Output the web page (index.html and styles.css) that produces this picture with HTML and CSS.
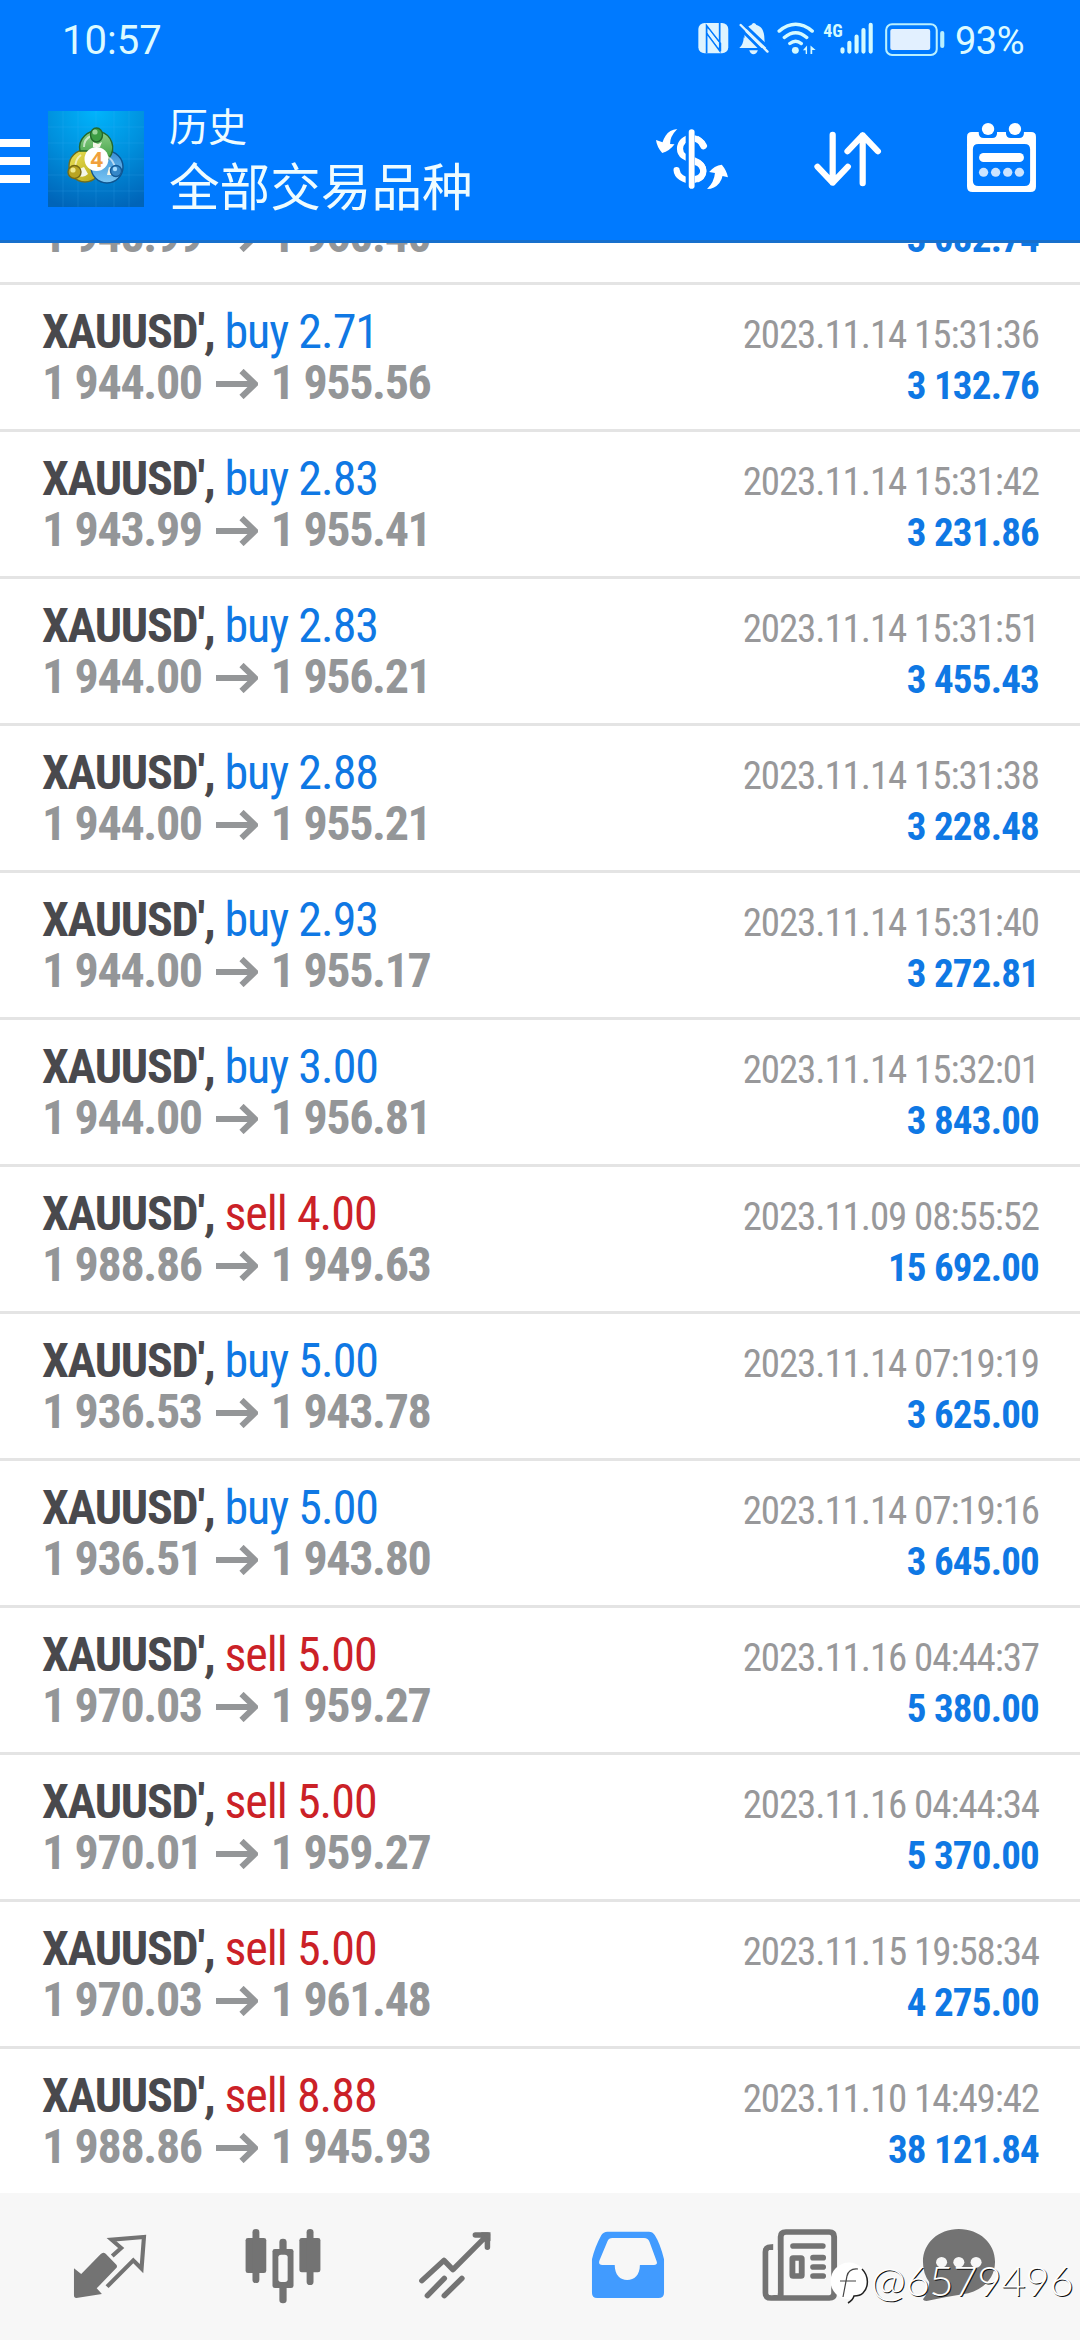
FILE: index.html
```
<!DOCTYPE html>
<html lang="zh-CN">
<head>
<meta charset="utf-8">
<title>历史</title>
<link rel="stylesheet" href="styles.css">
</head>
<body>
<div class="screen">
  <header class="header">
    <div class="status">
      <span class="clock">10:57</span>
      <svg class="status-icons" viewBox="457 60 718 110" preserveAspectRatio="none">
        <rect x="458" y="66" width="87" height="90" rx="18" fill="#def4ff"/>
        <path d="M482 156V74L522 126V150M520 66V148L482 96V156" fill="none" stroke="#007aff" stroke-width="5"/>
        <path d="M487 84L517 124V140L487 99Z" fill="#def4ff"/>
        <path d="M586 140Q592 130 592 112C592 86 602 74 612 72Q619 60 627 72C642 76 650 90 650 112Q650 130 658 140Z" fill="#def4ff"/>
        <path d="M606 147H631Q627 159 618 159Q610 159 606 147Z" fill="#def4ff"/>
        <path d="M577 80L655 160" stroke="#007aff" stroke-width="8"/>
        <path d="M586 66L668 146" stroke="#007aff" stroke-width="9"/>
        <path d="M581 72L659 151" stroke="#def4ff" stroke-width="7" stroke-linecap="round"/>
        <path d="M577 140Q589 130 590 108L622 140Z" fill="#def4ff"/>
        <g fill="none" stroke="#d4faff" stroke-width="10" stroke-linecap="round">
          <path d="M693 90Q741 50 789 90M708 109Q741 81 773 109M724 127Q741 113 757 127"/>
        </g>
        <circle cx="740" cy="147" r="10" fill="#d4faff"/>
        <path d="M762 147L774 133V158H770V147ZM784 133L799 146H789V158H784Z" fill="#d4faff"/>
        <text x="821" y="107" class="net">4G</text>
        <g stroke="#d4faff" stroke-width="12" stroke-linecap="round">
          <path d="M877 144V151M897 125V151M918 106V151M938 87V151M959 71V151"/>
        </g>
        <rect x="1004" y="70" width="147" height="91" rx="17" fill="none" stroke="#b9f0ff" stroke-width="6"/>
        <rect x="1016" y="84" width="116" height="62" rx="6" fill="#e2f0ff"/>
        <rect x="1161" y="90" width="12" height="50" rx="6" fill="#b9f0ff"/>
      </svg>
      <span class="battery">93%</span>
    </div>
    <div class="toolbar">
      <svg class="menu" viewBox="0 0 30 44"><path d="M0 4H30M0 22H30M0 40H30" stroke="#fff" stroke-width="8"/></svg>
      <svg class="logo" viewBox="0 0 96 96">
        <defs>
          <radialGradient id="bg" cx=".5" cy="0" r="1.05"><stop offset="0" stop-color="#00b4fc"/><stop offset=".5" stop-color="#0090dd"/><stop offset="1" stop-color="#0064b8"/></radialGradient>
          <linearGradient id="gr" x2="0" y2="1"><stop offset="0" stop-color="#8fd08a"/><stop offset="1" stop-color="#2c9433"/></linearGradient>
          <linearGradient id="ye" x2="1" y2="1"><stop offset="0" stop-color="#ece35a"/><stop offset="1" stop-color="#b3a412"/></linearGradient>
          <linearGradient id="bl" x2="0" y2="1"><stop offset="0" stop-color="#3a8ed4"/><stop offset="1" stop-color="#79c6f4"/></linearGradient>
        </defs>
        <rect width="96" height="96" fill="url(#bg)"/>
        <path d="M15 0V96M30 0V96M48 0V96M66 0V96M81 0V96M0 16H96M0 32H96M0 48H96M0 64H96M0 80H96" stroke="#4fc3ff" stroke-opacity=".15" fill="none"/>
        <g stroke-width="1.4">
          <circle cx="37" cy="55" r="16" fill="url(#ye)" stroke="#6d6d22"/>
          <circle cx="59" cy="56" r="16" fill="url(#bl)" stroke="#0e548f"/>
          <path d="M32 40A16.500 16.500 0 1 1 61 47L55 55L40 40Z" fill="url(#gr)" stroke="#24682b"/>
          <path d="M36 36Q36 28 43 25M60 46Q66 50 67 57M27 58Q27 48 33 44" fill="none" stroke="#fff" stroke-opacity=".6" stroke-width="2"/>
          <path d="M31 58L36 56L40 63Q36 67 31 65ZM61 56L66 58L65 64L59 64ZM45 31L50 33L54 31L52 36H45Z" fill="#f4f6e8"/>
          <ellipse cx="48.500" cy="24" rx="6" ry="7" fill="#3d9d44" stroke="#24682b"/>
          <circle cx="26.500" cy="61" r="6.500" fill="#b9a423" stroke="#776b14"/>
          <circle cx="68" cy="60" r="5.500" fill="#3587c8" stroke="#145a98"/>
          <circle cx="47" cy="21" r="2.600" fill="#9bd59b"/>
          <circle cx="25" cy="59" r="2.600" fill="#f0e88c"/>
          <circle cx="67" cy="58" r="2.200" fill="#a4dbff"/>
        </g>
        <circle cx="48.500" cy="48" r="12" fill="#fff"/>
        <text x="42.500" y="56" class="four">4</text>
      </svg>
      <div class="titles"><div class="section">历史</div><div class="title">全部交易品种</div></div>
      <svg class="ic-dollar" viewBox="328 384 216 186" preserveAspectRatio="none">
        <path d="M469 439Q460 413 436 413C414 413 401 430 401 446C401 467 419 474 436 480C455 486 469 497 469 513C469 532 452 542 436 542C412 542 392 528 391 510" fill="none" stroke="#fff" stroke-width="18" stroke-linecap="round"/>
        <path d="M435 384V570" stroke="#007aff" stroke-width="35"/>
        <path d="M444 406Q468 412 478 432A8 8 0 0 1 463 443Q457 430 444 425ZM444 472Q479 486 478 514Q477 541 444 549V528Q461 524 460 512Q460 501 444 495Z" fill="#fff"/>
        <path d="M435 396V558" stroke="#fff" stroke-width="17" stroke-linecap="round"/>
        <path d="M393 387Q370 389 359 407Q352 418 350 427L331 420Q333 440 349 459Q370 454 385 433L372 432Q371 410 393 387Z" fill="#fff"/>
        <path d="M480 567Q502 567 516 549Q524 537 525 528L541 532Q537 511 523 494Q501 497 486 516L503 519Q501 546 480 567Z" fill="#fff"/>
      </svg>
      <svg class="ic-sort" viewBox="788 390 200 174" preserveAspectRatio="none">
        <path d="M845 404V548M801 500L845 548L889 500M932 550V406M888 454L932 406L976 454" fill="none" stroke="#fff" stroke-width="18" stroke-linecap="round" stroke-linejoin="round"/>
      </svg>
      <svg class="ic-cal" viewBox="1234 366 206 213" preserveAspectRatio="none">
        <path fill-rule="evenodd" d="M1251 396H1423Q1437 396 1437 410V560Q1437 576 1421 576H1253Q1237 576 1237 560V410Q1237 396 1251 396ZM1270 432Q1254 432 1254 448V542Q1254 558 1270 558H1404Q1420 558 1420 542V448Q1420 432 1404 432Z" fill="#fff"/>
        <path d="M1271 390V400Q1271 414 1286 414H1310Q1324 414 1324 400V390ZM1350 390V400Q1350 414 1364 414H1388Q1402 414 1402 400V390Z" fill="#007aff"/>
        <circle cx="1298" cy="387" r="18" fill="#fff"/><circle cx="1376" cy="387" r="18" fill="#fff"/>
        <rect x="1272" y="459" width="130" height="27" rx="13" fill="#fff"/>
        <g fill="#cce4ff"><circle cx="1285" cy="517" r="13.500"/><circle cx="1320" cy="517" r="13.500"/><circle cx="1355" cy="517" r="13.500"/><circle cx="1389" cy="517" r="13.500"/></g>
      </svg>
    </div>
  </header>

  <main class="list" id="list"></main>

  <nav class="nav">
    <svg viewBox="203.500 120 232 270" preserveAspectRatio="none">
      <path d="M215 265L236 282L292 223Q299 215 307 221L338 254Q342 260 337 265L281 325L296 342L222 354Q215 354 215 346Z" fill="#737373"/>
      <path d="M326 228L352 204L324 179L418 171L411 266L387 241L311 320" fill="none" stroke="#737373" stroke-width="12"/>
    </svg>
    <svg viewBox="701.500 120 232 270" preserveAspectRatio="none">
      <g fill="#737373"><rect x="709" y="174" width="60" height="105" rx="7"/><rect x="865" y="174" width="61" height="103" rx="7"/><rect x="729" y="147" width="20" height="162" rx="10"/><rect x="886" y="147" width="20" height="168" rx="10"/><rect x="807" y="176" width="21" height="194" rx="10"/><rect x="787" y="207" width="61" height="117" rx="7"/></g>
      <rect x="804" y="224" width="27" height="82" rx="8" fill="#f7f7f7"/>
    </svg>
    <svg viewBox="1201 120 232 270" preserveAspectRatio="none">
      <path d="M1221 302L1285 241L1311 269L1411 165M1376 165H1411V202M1237 347L1286 295M1286 347L1337 295" fill="none" stroke="#737373" stroke-width="16" stroke-linecap="round" stroke-linejoin="round"/>
      <path d="M1392 157H1420V184Z" fill="#737373"/>
    </svg>
    <svg viewBox="135.500 120 232 270" preserveAspectRatio="none">
      <path fill-rule="evenodd" d="M192 155H312Q323 155 329 165Q345 191 356 238V338Q356 354 340 354H162Q147 354 147 338V238Q155 202 174 166Q180 155 192 155ZM206 174Q196 174 192 184L169 241Q164 255 177 255H213C213 285 229 300 249 300C270 300 286 285 286 255H327Q339 255 334 242L314 186Q310 174 298 174Z" fill="#419bff"/>
    </svg>
    <svg viewBox="639 120 232 270" preserveAspectRatio="none">
      <path d="M677 201H671Q655 201 655 216V338Q655 354 671 354H840Q854 354 854 340V170Q854 156 840 156H714Q699 156 699 170V352" fill="none" stroke="#737373" stroke-width="17"/>
      <path d="M677 192V210H668L662 204ZM690 340V354H662Z" fill="#737373"/>
      <path d="M664 214Q664 210 668 210H690V345H668Q664 345 664 341Z" fill="#f7f7f7"/>
      <path d="M735 198H821M793 233H822M793 261H822M793 288H822" stroke="#737373" stroke-width="17" stroke-linecap="round"/>
      <rect x="733" y="234" width="27" height="54" rx="2" fill="none" stroke="#737373" stroke-width="17"/>
    </svg>
    <svg class="chat" viewBox="1097.500 120 232 270" preserveAspectRatio="none">
      <path d="M1213 147C1273 147 1318 190 1318 245C1318 300 1275 336 1224 343Q1180 350 1130 361Q1112 366 1109 358Q1127 335 1127 306Q1109 280 1109 245C1109 190 1153 147 1213 147Z" fill="#737373"/>
      <g fill="#f7f7f7"><circle cx="1163" cy="247" r="16"/><circle cx="1213" cy="247" r="16"/><circle cx="1263" cy="247" r="16"/></g>
    </svg>
  </nav>

  <div class="watermark">
    <svg viewBox="0 0 42 46"><circle cx="20" cy="20" r="18.500" fill="#fff"/><path d="M33 8C40 15 40 26 34 32Q31 35 25 35Q24 39 19 42" fill="none" stroke="#222" stroke-width="1.500"/><path d="M29 8Q20 7 18 15L14 36M11 20H27" fill="none" stroke="#444" stroke-width="1.200"/></svg>
    <span>@6579496</span>
  </div>
</div>
<script src="rows.js"></script>
</body>
</html>
```
FILE: rows.js
```
const deals = [
  ["buy", "2.70", "1 948.99", "1 960.40", "2023.11.14 15:31:35", "3 082.74"],
  ["buy", "2.71", "1 944.00", "1 955.56", "2023.11.14 15:31:36", "3 132.76"],
  ["buy", "2.83", "1 943.99", "1 955.41", "2023.11.14 15:31:42", "3 231.86"],
  ["buy", "2.83", "1 944.00", "1 956.21", "2023.11.14 15:31:51", "3 455.43"],
  ["buy", "2.88", "1 944.00", "1 955.21", "2023.11.14 15:31:38", "3 228.48"],
  ["buy", "2.93", "1 944.00", "1 955.17", "2023.11.14 15:31:40", "3 272.81"],
  ["buy", "3.00", "1 944.00", "1 956.81", "2023.11.14 15:32:01", "3 843.00"],
  ["sell", "4.00", "1 988.86", "1 949.63", "2023.11.09 08:55:52", "15 692.00"],
  ["buy", "5.00", "1 936.53", "1 943.78", "2023.11.14 07:19:19", "3 625.00"],
  ["buy", "5.00", "1 936.51", "1 943.80", "2023.11.14 07:19:16", "3 645.00"],
  ["sell", "5.00", "1 970.03", "1 959.27", "2023.11.16 04:44:37", "5 380.00"],
  ["sell", "5.00", "1 970.01", "1 959.27", "2023.11.16 04:44:34", "5 370.00"],
  ["sell", "5.00", "1 970.03", "1 961.48", "2023.11.15 19:58:34", "4 275.00"],
  ["sell", "8.88", "1 988.86", "1 945.93", "2023.11.10 14:49:42", "38 121.84"]
];
const arrow = '<svg class="arrow" viewBox="0 0 42 30"><path d="M0 15H39M25.500 2L39 15L25.500 28" fill="none" stroke="#949698" stroke-width="6"/></svg>';
document.getElementById("list").innerHTML = deals.map(([side, lots, open, close, time, profit]) => `
  <article class="deal">
    <div class="line"><span><b class="symbol">XAUUSD',</b><span class="order ${side}">${side} ${lots}</span></span><time class="time">${time}</time></div>
    <div class="line"><span class="prices">${open}${arrow}${close}</span><span class="profit">${profit}</span></div>
  </article>`).join("");
```
FILE: styles.css
```
* { box-sizing: border-box; }
body { margin: 0; background: #fff; }
.screen {
  position: relative;
  display: flex;
  flex-direction: column;
  width: 1080px;
  height: 2340px;
  overflow: hidden;
  font-family: "Roboto Condensed", Roboto, sans-serif;
}
svg { display: block; flex: none; }

.header {
  flex: none;
  height: 243px;
  background: #007aff;
  border-bottom: 3px solid #1770cd;
  color: #effcff;
}
.status {
  display: flex;
  align-items: center;
  height: 76px;
  padding: 3px 56px 0 62px;
  font-family: Roboto, sans-serif;
  font-weight: 450;
  color: #dcfaff;
}
.clock { font-size: 40px; padding-top: 2px; }
.battery { font-size: 38px; margin-left: 10px; padding-top: 2px; letter-spacing: -0.5px; }
.status-icons { width: 247px; height: 37px; margin-left: auto; }
.net { font: 700 52px "Roboto Condensed", sans-serif; fill: #d4faff; }

.toolbar { display: flex; align-items: flex-start; }
.menu { width: 30px; height: 44px; margin-top: 63px; }
.logo { width: 96px; height: 96px; margin: 35px 25px 0 18px; }
.four { font: 700 22px "Noto Sans", sans-serif; fill: #f0a03c; }
.titles {
  flex: 1;
  padding-top: 19px;
  font-family: "Noto Sans CJK SC", sans-serif;
  white-space: nowrap;
}
.section { font-size: 39px; line-height: 58px; }
.title { font-size: 50.6px; line-height: 62px; }
.ic-dollar { width: 74px; height: 62px; margin-top: 52px; }
.ic-sort { width: 69px; height: 58px; margin: 54px 0 0 84px; }
.ic-cal { width: 71px; height: 71px; margin: 46px 43px 0 84px; }

.list { flex: none; height: 1950px; overflow: hidden; }
.deal {
  height: 147px;
  padding: 21px 42px 0;
  border-bottom: 3px solid #e4e4e4;
}
.deal:first-child { margin-top: -105px; }
.line {
  display: flex;
  justify-content: space-between;
  align-items: baseline;
  height: 51px;
  line-height: 51px;
  white-space: nowrap;
}
.symbol { font-size: 48px; letter-spacing: -1.25px; color: #49494d; margin-right: 10px; }
.order { font-size: 48px; letter-spacing: -1px; }
.buy { color: #0f78e4; }
.sell { color: #cb2127; }
.time { font-size: 39px; letter-spacing: -1.1px; color: #98989a; margin-right: -1px; }
.prices { font-size: 48px; font-weight: 700; letter-spacing: -1.35px; color: #949698; }
.arrow { display: inline-block; width: 42px; height: 30px; margin: 0 13px 0 14px; }
.profit { font-size: 39px; font-weight: 700; letter-spacing: -0.8px; color: #0f78e4; margin-right: -1px; }

.nav {
  flex: none;
  display: flex;
  gap: 92.500px;
  height: 147px;
  padding: 27px 0 0 70px;
  background: #f7f7f7;
}
.nav svg { width: 80px; height: 90px; }
.nav .chat { margin-left: -14px; }

.watermark {
  position: absolute;
  left: 829px;
  top: 2261px;
  display: flex;
  align-items: flex-start;
  font: 300 42px/38px Lato, sans-serif;
  letter-spacing: -0.4px;
  color: #fff;
  text-shadow: 1px 1px 0 #111;
}
.watermark svg { width: 42px; height: 46px; }
```
